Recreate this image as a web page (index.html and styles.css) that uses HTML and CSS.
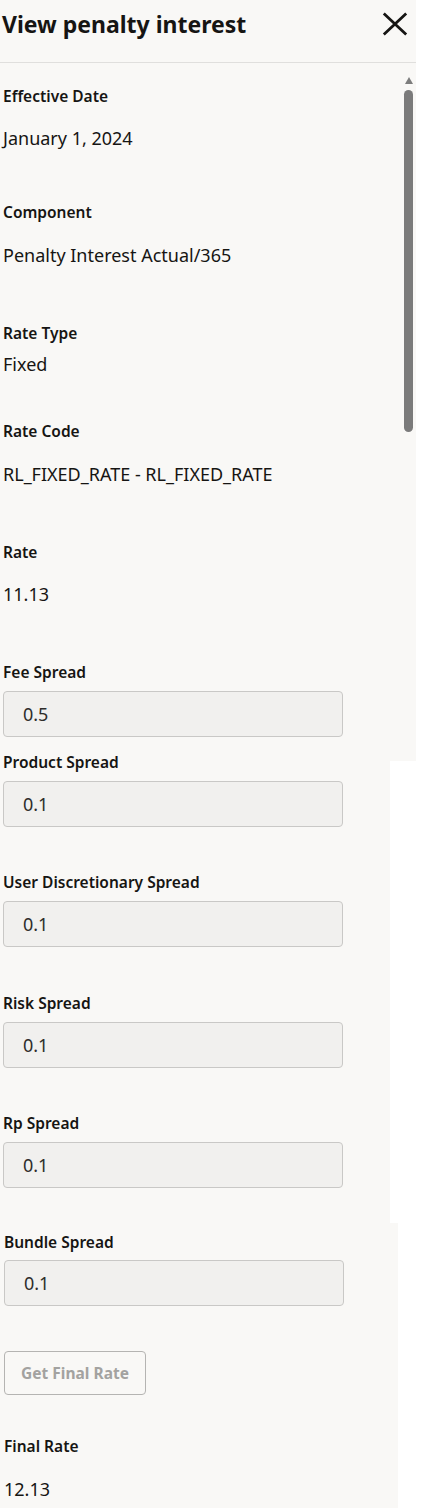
FILE: index.html
```html
<!DOCTYPE html>
<html lang="en">
<head>
<meta charset="utf-8">
<title>View penalty interest</title>
<link rel="stylesheet" href="styles.css">
</head>
<body>
<div class="panel">
  <section class="sec sec1">
    <header class="hdr">
      <h1 class="title">View penalty interest</h1>
      <button class="close" aria-label="Close">
        <svg width="26" height="24" viewBox="0 0 26 24"><path d="M1.8 1.5 L24.2 22.5 M24.2 1.5 L1.8 22.5" stroke="#161513" stroke-width="2.8" fill="none"/></svg>
      </button>
    </header>
    <div class="f f-top"><div class="lbl">Effective Date</div><div class="val">January 1, 2024</div></div>
    <div class="f f-52"><div class="lbl">Component</div><div class="val val-21">Penalty Interest Actual/365</div></div>
    <div class="f"><div class="lbl">Rate Type</div><div class="val val-tight">Fixed</div></div>
    <div class="f f-45"><div class="lbl">Rate Code</div><div class="val val-21">RL_FIXED_RATE - RL_FIXED_RATE</div></div>
    <div class="f"><div class="lbl">Rate</div><div class="val">11.13</div></div>
    <div class="f"><div class="lbl">Fee Spread</div><div class="box">0.5</div></div>
    <div class="scrollbar"><span class="arrow"></span><span class="thumb"></span></div>
  </section>
  <section class="sec sec2">
    <div class="f f-up"><div class="lbl">Product Spread</div><div class="box">0.1</div></div>
    <div class="f f-45"><div class="lbl">User Discretionary Spread</div><div class="box">0.1</div></div>
    <div class="f f-46"><div class="lbl">Risk Spread</div><div class="box">0.1</div></div>
    <div class="f f-45"><div class="lbl">Rp Spread</div><div class="box">0.1</div></div>
  </section>
  <section class="sec sec3">
    <div class="f f-9"><div class="lbl">Bundle Spread</div><div class="box box-8">0.1</div></div>
    <button class="btn">Get Final Rate</button>
    <div class="f f-41"><div class="lbl">Final Rate</div><div class="val val-21">12.13</div></div>
  </section>
</div>
</body>
</html>
```
FILE: styles.css
```css
* { box-sizing: border-box; }
body {
  margin: 0;
  background: #ffffff;
  font-family: "Noto Sans", "Liberation Sans", sans-serif;
  color: #161513;
}
.panel { display: flex; flex-direction: column; }
.sec {
  background: #f9f8f6;
  display: flex;
  flex-direction: column;
  align-items: flex-start;
  padding-left: 3px;
}
.sec1 { width: 416px; position: relative; padding-left: 0; padding-bottom: 24px; }
.sec1 .f { padding-left: 3px; }
.sec2 { width: 390px; position: relative; padding-bottom: 35px; }
.sec3 { width: 398px; padding-left: 4px; padding-bottom: 7px; }

.hdr {
  width: 100%;
  height: 63px;
  display: flex;
  justify-content: space-between;
  align-items: flex-start;
  border-bottom: 1px solid #e0dfdd;
  padding-left: 2px;
}
.title {
  margin: 9px 0 0;
  font-size: 23px;
  line-height: 30px;
  font-weight: 700;
}
.close {
  margin: 12px 8px 0 0;
  padding: 0;
  border: 0;
  background: none;
  width: 26px;
  height: 24px;
  display: block;
}
.close svg { display: block; }

.f { margin-top: 56px; display: flex; flex-direction: column; align-items: flex-start; }
.f-top { margin-top: 23px; }
.f-52 { margin-top: 52px; }
.f-45 { margin-top: 45px; }
.f-46 { margin-top: 46px; }
.f-41 { margin-top: 41px; }
.f-9 { margin-top: 9px; }
.f-up { margin-top: -9px; }

.lbl {
  font-size: 15.5px;
  line-height: 20px;
  font-weight: 600;
  color: #161513;
  white-space: nowrap;
}
.val {
  margin-top: 20px;
  font-size: 18px;
  line-height: 24px;
  font-weight: 400;
  color: #161513;
  white-space: nowrap;
}
.val-21 { margin-top: 21px; }
.val-tight { margin-top: 9px; }

.box {
  margin-top: 9px;
  width: 340px;
  height: 46px;
  border: 1px solid #c9c8c6;
  border-radius: 4px;
  background: #f1f0ee;
  padding-left: 19px;
  display: flex;
  align-items: center;
  font-size: 18px;
  color: #2e2d2b;
}
.box-8 { margin-top: 8px; }

.btn {
  margin-top: 45px;
  width: 142px;
  height: 44px;
  border: 1px solid #b5b4b2;
  border-radius: 4px;
  background: transparent;
  font-family: "Noto Sans", "Liberation Sans", sans-serif;
  font-size: 15.5px;
  font-weight: 700;
  color: #a3a2a0;
  padding: 0;
}

.scrollbar {
  position: absolute;
  top: 77px;
  right: 3px;
  width: 9px;
  display: flex;
  flex-direction: column;
  align-items: center;
}
.arrow {
  width: 0;
  height: 0;
  border-left: 4.5px solid transparent;
  border-right: 4.5px solid transparent;
  border-bottom: 7px solid #7d7d7d;
}
.thumb {
  margin-top: 6px;
  width: 9px;
  height: 342px;
  border-radius: 5px;
  background: #7b7b7b;
}
```
